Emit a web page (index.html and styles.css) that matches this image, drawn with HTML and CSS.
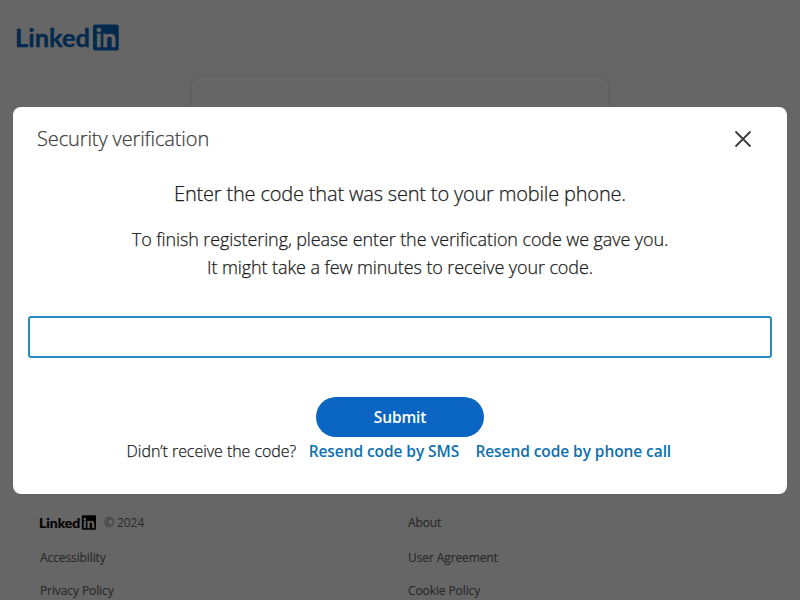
FILE: index.html
```html
<!DOCTYPE html>
<html lang="en">
<head>
<meta charset="utf-8">
<title>Security verification</title>
<link rel="stylesheet" href="styles.css">
</head>
<body>
<div class="page">
  <header class="page-header">
    <svg class="logo" width="103" height="27" viewBox="0 0 103 27" role="img" aria-label="LinkedIn">
      <text class="logo-word" x="-1" y="22.7" font-size="25" textLength="75" lengthAdjust="spacingAndGlyphs">Linked</text>
      <rect class="logo-box" x="77" y="0.5" width="25.7" height="26" rx="2"/>
      <text class="logo-in" x="79.4" y="22.7" font-size="25" textLength="21" lengthAdjust="spacingAndGlyphs">in</text>
    </svg>
  </header>
  <div class="card"></div>
  <footer class="footer">
    <ul class="footer-list">
      <li class="brand">
        <svg class="brand-logo" width="57" height="15" viewBox="0 0 103 27" role="img" aria-label="LinkedIn">
          <text class="logo-word" x="0" y="22.7" font-size="25" textLength="74.5" lengthAdjust="spacingAndGlyphs">Linked</text>
          <rect class="logo-box" x="77.3" y="0.5" width="25.7" height="26" rx="2"/>
          <text class="logo-in" x="79.7" y="22.7" font-size="25" textLength="21" lengthAdjust="spacingAndGlyphs">in</text>
        </svg>
        <span class="year">© 2024</span>
      </li>
      <li>Accessibility</li>
      <li>Privacy Policy</li>
    </ul>
    <ul class="footer-list">
      <li>About</li>
      <li>User Agreement</li>
      <li>Cookie Policy</li>
    </ul>
  </footer>
</div>
<div class="overlay">
  <section class="modal" role="dialog" aria-modal="true">
    <div class="modal-header">
      <h1 class="modal-title">Security verification</h1>
      <button class="close" aria-label="Close">
        <svg width="18" height="18" viewBox="0 0 18 18"><path d="M1.5 1.5 16.5 16.5M16.5 1.5 1.5 16.5"/></svg>
      </button>
    </div>
    <h2 class="lead">Enter the code that was sent to your mobile phone.</h2>
    <p class="copy">To finish registering, please enter the verification code we gave you.<br>It might take a few minutes to receive your code.</p>
    <input class="code" type="text" aria-label="Verification code">
    <button class="submit">Submit</button>
    <div class="resend">
      <span class="question">Didn’t receive the code?</span>
      <a class="link link-sms">Resend code by SMS</a>
      <a class="link link-call">Resend code by phone call</a>
    </div>
  </section>
</div>
</body>
</html>
```
FILE: styles.css
```css
* { box-sizing: border-box; }
body {
  margin: 0;
  height: 600px;
  overflow: hidden;
  background: #666;
  font-family: "Open Sans", "Noto Sans", sans-serif;
}
.page { display: flex; flex-direction: column; height: 600px; }
.page-header { flex: none; height: 76px; padding: 24px 0 0 15.5px; color: #04294e; }
.logo, .brand-logo { display: block; overflow: visible; }
.logo-word { font-family: Lato, sans-serif; font-weight: 700; fill: currentColor; stroke: currentColor; stroke-width: 0.4; }
.logo-box { fill: currentColor; }
.logo-in { font-family: Lato, sans-serif; font-weight: 700; fill: #666; stroke: #666; stroke-width: 0.5; }
.card {
  flex: none;
  width: 416px;
  height: 400px;
  margin: 0 auto 29px;
  border-radius: 8px;
  box-shadow: 0 0 0 1px #5f5f5f, 0 2px 4px #5c5c5c;
}
.footer {
  display: grid;
  grid-template-columns: 368px 1fr;
  padding: 8px 0 0 40px;
  font-size: 12px;
  letter-spacing: -0.1px;
  color: #292929;
  -webkit-text-stroke: 0.15px currentColor;
  white-space: nowrap;
}
.footer-list { margin: 0; padding: 0; list-style: none; }
.footer-list li { height: 20px; line-height: 20px; margin-bottom: 13px; }
.footer-list li:first-child { margin-bottom: 15px; }
.brand { display: flex; align-items: center; gap: 8px; }
.brand-logo { color: #000; margin: 0 0 2px -1px; letter-spacing: 0; }
.year { -webkit-text-stroke: 0; letter-spacing: -0.05px; }
.overlay { position: absolute; inset: 0; padding: 106.6px 12.6px 0; }
.modal {
  height: 387.8px;
  display: flex;
  flex-direction: column;
  border-radius: 8px;
  background: #fff;
  color: #1c1c1c;
}
.modal-header {
  display: flex;
  flex: none;
  align-items: center;
  justify-content: space-between;
  height: 64px;
  padding: 0 35.4px 0 24.4px;
}
.modal-title, .lead, .copy, .question { font-weight: 300; -webkit-text-stroke: 0.25px currentColor; }
.modal-title, .lead { margin: 0; font-size: 20px; white-space: nowrap; }
.modal-title { color: #404040; letter-spacing: -0.11px; }
.close { display: flex; padding: 0; border: 0; background: none; }
.close path { stroke: #3b3b3b; stroke-width: 1.8; fill: none; }
.lead { height: 32px; margin-top: 7px; line-height: 32px; text-align: center; letter-spacing: -0.18px; }
.copy {
  margin: 15px 0 35.4px;
  font-size: 18px;
  line-height: 28px;
  text-align: center;
  letter-spacing: -0.1px;
}
.code {
  flex: none;
  height: 42px;
  margin: 0 15.4px 39px;
  border: 2px solid #2b8abf;
  border-radius: 3px;
  outline: 0;
}
.submit {
  flex: none;
  align-self: center;
  width: 168px;
  height: 40px;
  padding: 0;
  border: 0;
  border-radius: 20px;
  background: #0a66c2;
  color: #fff;
  font: 600 15.5px "Open Sans", sans-serif;
  letter-spacing: -0.15px;
}
.resend {
  display: flex;
  height: 30px;
  padding-left: 114px;
  line-height: 29px;
  font-size: 16px;
  letter-spacing: -0.05px;
  white-space: nowrap;
}
.link { font-size: 15.5px; font-weight: 600; color: #0f70ad; letter-spacing: -0.08px; }
.link-sms { margin-left: 12.5px; }
.link-call { margin-left: 16.3px; }
```
